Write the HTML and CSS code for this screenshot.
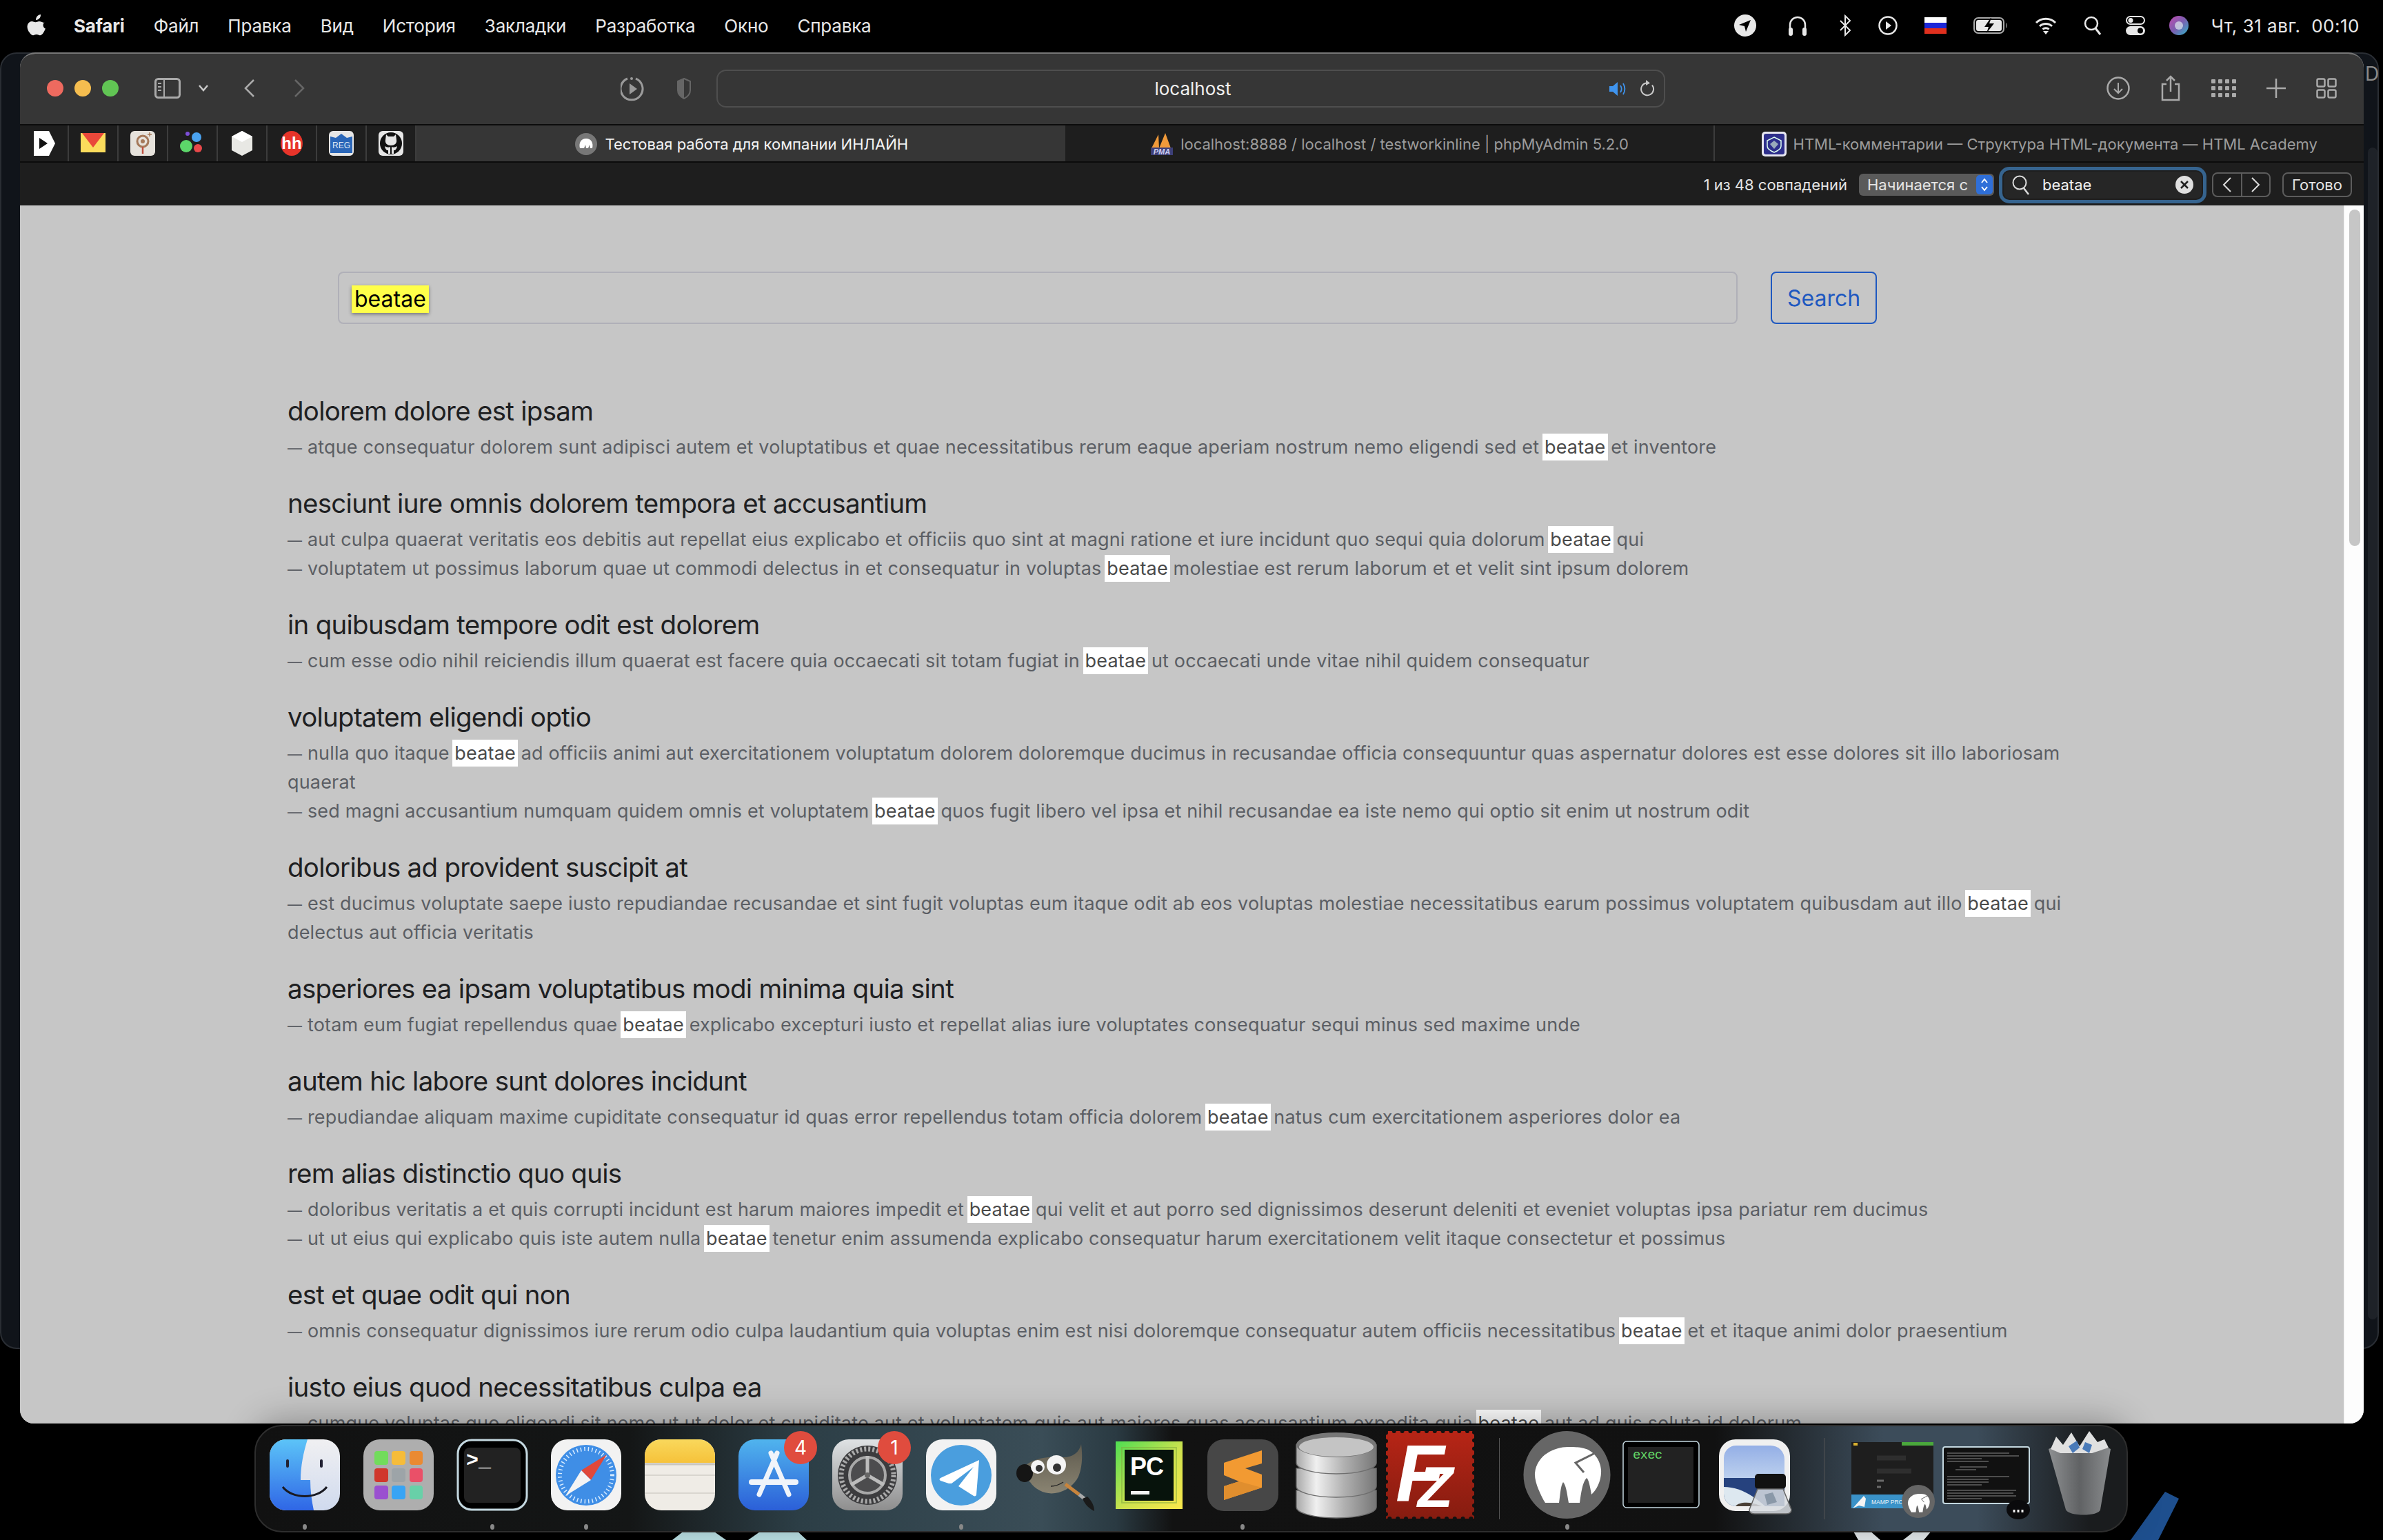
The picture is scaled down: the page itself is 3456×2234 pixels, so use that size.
FILE: index.html
```html
<!DOCTYPE html>
<html lang="ru">
<head>
    <meta charset="UTF-8">
    <title>Safari</title>
    <link rel="stylesheet" href="styles.css">
</head>
<body>
    <svg class="wallpaper" width="3456" height="2234" viewBox="0 0 3456 2234">
        <path d="M975 2234l18-14h40l20 14zM1085 2234l20-14h50l15 14z" fill="#bfe6ea"/>
        <path d="M2695 2234l-8-14h24l16 14zM2760 2234l18-14h24l-12 14z" fill="#e8eef0"/>
        <path d="M3090 2234l50-70 20 10-30 60z" fill="#1e4f8e"/>
    </svg>
    <div class="back-window back-left"></div>
    <div class="back-window back-right"><span class="back-letter">D</span><i class="back-bar"></i></div>

    <header class="menubar">
        <svg class="apple" width="28" height="32" viewBox="0 0 28 32"><path fill="#e8e8e8" d="M20 0c.2 2.200-.6 4.200-1.800 5.600-1.300 1.500-3.200 2.600-5.100 2.400-.2-2 .7-4.200 1.900-5.500C16.300 1 18.300.1 20 0zM26 11c-3.600 2.200-3.100 7.700.9 9.500-.8 2.100-1.700 4-3 5.900-1.300 1.900-2.800 3.800-5 3.800-2 0-2.600-1.200-5-1.200s-3.100 1.200-5 1.200c-2.100 0-3.700-2-5-3.900C.7 22.800-.6 17 1.800 13.200 3 11.300 5 10 7.200 10c2.200 0 3.600 1.300 5.400 1.300 1.700 0 2.800-1.300 5.300-1.300 2.200 0 4.500 1 6.100 2z"/></svg>
        <nav class="menu">
            <b>Safari</b><span>Файл</span><span>Правка</span><span>Вид</span><span>История</span><span>Закладки</span><span>Разработка</span><span>Окно</span><span>Справка</span>
        </nav>
        <div class="status">
            <svg width="32" height="32" viewBox="0 0 32 32"><circle cx="16" cy="16" r="16" fill="#e8e8e8"/><path d="M24 8L7 15l8 2 2 8z" fill="#000"/></svg>
            <svg class="gap-wide" width="28" height="30" viewBox="0 0 28 30"><path d="M3 24V14a11 11 0 0 1 22 0v10" fill="none" stroke="#e8e8e8" stroke-width="2.500"/><rect x="1" y="18" width="6" height="12" rx="3" fill="#e8e8e8"/><rect x="21" y="18" width="6" height="12" rx="3" fill="#e8e8e8"/></svg>
            <svg class="gap-wide" width="18" height="32" viewBox="0 0 18 32"><path d="M2 9l14 14-7 7V2l7 7L2 23" fill="none" stroke="#e8e8e8" stroke-width="2"/></svg>
            <svg width="28" height="28" viewBox="0 0 28 28"><circle cx="14" cy="14" r="12.500" fill="none" stroke="#e8e8e8" stroke-width="2.500"/><path d="M11 8l8 6-8 6z" fill="#e8e8e8"/></svg>
            <svg width="32" height="24" viewBox="0 0 32 24"><rect width="32" height="8" fill="#fff"/><rect y="8" width="32" height="8" fill="#1c27d8"/><rect y="16" width="32" height="8" fill="#e0301e"/></svg>
            <svg width="50" height="24" viewBox="0 0 50 24"><rect x="1" y="1" width="43" height="22" rx="6" fill="none" stroke="#aaa" stroke-width="2"/><rect x="4" y="4" width="37" height="16" rx="3" fill="#e8e8e8"/><path d="M25 1l-9 13h6l-3 9 11-14h-7l3-8z" fill="#000"/><path d="M47 8c2 1 2 7 0 8z" fill="#888"/></svg>
            <svg width="32" height="26" viewBox="0 0 32 26"><path d="M2 9a20 20 0 0 1 28 0M7 14a13 13 0 0 1 18 0M11.500 18.500a6.500 6.500 0 0 1 9 0" fill="none" stroke="#e8e8e8" stroke-width="3"/><path d="M16 26l-4-5h8z" fill="#e8e8e8"/></svg>
            <svg width="26" height="28" viewBox="0 0 26 28"><circle cx="11" cy="11" r="9" fill="none" stroke="#e8e8e8" stroke-width="2.500"/><path d="M17 18l7 9" stroke="#e8e8e8" stroke-width="3"/></svg>
            <svg class="gap-narrow" width="28" height="28" viewBox="0 0 28 28"><rect x="1" y="1" width="26" height="11" rx="5.500" fill="none" stroke="#e8e8e8" stroke-width="2"/><circle cx="7" cy="6.500" r="3.500" fill="#e8e8e8"/><rect y="15" width="28" height="13" rx="6.500" fill="#e8e8e8"/><circle cx="21" cy="21.500" r="4" fill="#000"/></svg>
            <svg class="gap-narrow" width="28" height="28" viewBox="0 0 28 28"><defs><linearGradient id="siri" x1="0" y1="0" x2="1" y2="1"><stop offset="0" stop-color="#c04bb0"/><stop offset=".5" stop-color="#7a5fb0"/><stop offset="1" stop-color="#2fb4c8"/></linearGradient></defs><circle cx="14" cy="14" r="14" fill="url(#siri)"/><circle cx="14" cy="14" r="6" fill="#dfe8f0" opacity=".7"/></svg>
            <span class="clock">Чт, 31 авг.&nbsp; 00:10</span>
        </div>
    </header>

    <main class="window">
        <div class="toolbar">
            <div class="lights"><i class="light red"></i><i class="light yellow"></i><i class="light green"></i></div>
            <svg class="t-sidebar" width="38" height="30" viewBox="0 0 38 30"><rect x="1.500" y="1.500" width="35" height="27" rx="4" fill="none" stroke="#aaa" stroke-width="3"/><path d="M14 2v26" stroke="#aaa" stroke-width="2"/><path d="M5 8h5M5 13h5M5 18h5" stroke="#aaa" stroke-width="2"/></svg>
            <svg class="t-chevron" width="16" height="10" viewBox="0 0 16 10"><path d="M2 1l6 7 6-7" fill="none" stroke="#c8c8c8" stroke-width="2.500"/></svg>
            <svg class="t-back" width="20" height="28" viewBox="0 0 20 28"><path d="M16 2L4 14l12 12" fill="none" stroke="#aaa" stroke-width="2.500"/></svg>
            <svg class="t-forward" width="20" height="28" viewBox="0 0 20 28"><path d="M4 2l12 12L4 26" fill="none" stroke="#666" stroke-width="2.500"/></svg>
            <svg class="t-play" width="36" height="37" viewBox="0 0 36 37"><path d="M22 4a16 16 0 1 1-12 0" fill="none" stroke="#9a9a9a" stroke-width="3"/><circle cx="16" cy="4" r="2" fill="#9a9a9a"/><path d="M13 11l11 8-11 8z" fill="#9a9a9a"/></svg>
            <svg class="t-shield" width="20" height="31" viewBox="0 0 20 31"><path d="M10 1l9 4v13c0 6-5 10-9 12-4-2-9-6-9-12V5z" fill="none" stroke="#666" stroke-width="2"/><path d="M10 1v29C6 28 1 24 1 18V5z" fill="#666"/></svg>
            <div class="urlbar">
                <span class="url-text">localhost</span>
                <svg class="url-sound" width="28" height="22" viewBox="0 0 28 22"><path d="M1 7h5l7-6v20l-7-6H1z" fill="#3f94ee"/><path d="M17 6c2 3 2 7 0 10M21 3c3 5 3 11 0 16" fill="none" stroke="#3f94ee" stroke-width="1.800"/></svg>
                <svg class="url-reload" width="22" height="26" viewBox="0 0 22 26"><path d="M8 5.500a9 9 0 1 0 9 3" fill="none" stroke="#c8c8c8" stroke-width="2"/><path d="M8 1l6 4.500L8 9z" fill="#c8c8c8"/></svg>
            </div>
            <div class="t-right">
                <svg width="34" height="34" viewBox="0 0 34 34"><circle cx="17" cy="17" r="15.500" fill="none" stroke="#aaa" stroke-width="2.500"/><path d="M17 9v15M11 18l6 6 6-6" fill="none" stroke="#aaa" stroke-width="2"/></svg>
                <svg width="30" height="38" viewBox="0 0 30 38"><path d="M9 13H3v23h24V13h-6M15 24V2M9 8l6-6 6 6" fill="none" stroke="#aaa" stroke-width="2.500"/></svg>
                <svg width="36" height="26" viewBox="0 0 36 26" fill="#aaa"><rect width="6" height="6" rx="1"/><rect x="10" width="6" height="6" rx="1"/><rect x="20" width="6" height="6" rx="1"/><rect x="30" width="6" height="6" rx="1"/><rect y="10" width="6" height="6" rx="1"/><rect x="10" y="10" width="6" height="6" rx="1"/><rect x="20" y="10" width="6" height="6" rx="1"/><rect x="30" y="10" width="6" height="6" rx="1"/><rect y="20" width="6" height="6" rx="1"/><rect x="10" y="20" width="6" height="6" rx="1"/><rect x="20" y="20" width="6" height="6" rx="1"/><rect x="30" y="20" width="6" height="6" rx="1"/></svg>
                <svg width="28" height="28" viewBox="0 0 28 28"><path d="M14 0v28M0 14h28" stroke="#aaa" stroke-width="2.500"/></svg>
                <svg width="30" height="30" viewBox="0 0 30 30"><g fill="none" stroke="#aaa" stroke-width="2.500"><rect x="1.500" y="1.500" width="11" height="11" rx="2"/><rect x="17.500" y="1.500" width="11" height="11" rx="2"/><rect x="1.500" y="17.500" width="11" height="11" rx="2"/><rect x="17.500" y="17.500" width="11" height="11" rx="2"/></g></svg>
            </div>
        </div>

        <div class="tabbar">
            <div class="pin"><svg width="36" height="36" viewBox="0 0 36 36"><path d="M3 0h22l9 18-9 18H3z" fill="#fff"/><path d="M11 10l12 8-12 8z" fill="#111"/></svg></div>
            <div class="pin"><svg width="36" height="36" viewBox="0 0 36 36"><rect y="3" width="36" height="28" fill="#fbdc5c"/><path d="M2 3h32L18 24z" fill="#e9483a"/></svg></div>
            <div class="pin"><svg width="36" height="36" viewBox="0 0 36 36"><rect width="36" height="36" rx="6" fill="#e6e2dc"/><circle cx="18" cy="15" r="8" fill="none" stroke="#a5795a" stroke-width="3"/><circle cx="18" cy="15" r="3" fill="#a5795a"/><path d="M18 23v10" stroke="#c05040" stroke-width="2.500"/><path d="M28 2v6M25 5h6" stroke="#a5795a" stroke-width="1.500"/></svg></div>
            <div class="pin"><svg width="36" height="36" viewBox="0 0 36 36"><circle cx="24" cy="9" r="7" fill="#4aa3f0"/><circle cx="11" cy="4" r="3" fill="#7d4fd8"/><circle cx="9" cy="22" r="9" fill="#5cd66a"/><circle cx="26" cy="25" r="6" fill="#e8484a"/></svg></div>
            <div class="pin"><svg width="36" height="36" viewBox="0 0 36 36"><path d="M18 0l15 8v20l-15 8-15-8V8z" fill="#e8e8e4"/><path d="M18 0l15 8-15 8L3 8z" fill="#fff"/></svg></div>
            <div class="pin"><svg width="36" height="36" viewBox="0 0 36 36"><ellipse cx="18" cy="18" rx="16" ry="18" fill="#e8342a"/><text x="18" y="26" class="fav-hh" text-anchor="middle">hh</text></svg></div>
            <div class="pin"><svg width="36" height="36" viewBox="0 0 36 36"><rect width="36" height="36" rx="6" fill="#e6e6e6"/><path d="M2 8l8 2 8-6 8 6 8-2v24H2z" fill="#2a66b8"/><text x="18" y="25" class="fav-reg" text-anchor="middle">REG</text></svg></div>
            <div class="pin"><svg width="36" height="36" viewBox="0 0 36 36"><rect width="36" height="36" rx="6" fill="#e6e6e6"/><circle cx="18" cy="18" r="16" fill="#111"/><path d="M11 5l3 3h8l3-3 1 8c1 5-3 8-8 8s-9-3-8-8z" fill="#e6e6e6"/><path d="M9 22c3 2 6 2 8 1v10h-3v-5c-3 0-4-2-5-6zM19 23c2 1 5 1 8-1-1 4-2 6-5 6v5h-3z" fill="#e6e6e6"/></svg></div>
            <div class="tab tab-active"><svg width="36" height="32" viewBox="0 0 36 32"><circle cx="18" cy="16" r="16" fill="#777"/><path d="M9 22c-2-8 2-14 9-14s11 6 9 14h-3l-1-5-2 5h-3l-1-5-2 5z" fill="#fff"/></svg><span>Тестовая работа для компании ИНЛАЙН</span></div>
            <div class="tab"><svg width="34" height="32" viewBox="0 0 34 32"><path d="M2 22L12 2l1 20zM13 22L22 0l8 22zM3 22h28" fill="#f09a3a"/><rect x="1" y="21" width="32" height="11" fill="#3c3f78"/><text x="17" y="30.500" class="fav-pma" text-anchor="middle">PMA</text></svg><span>localhost:8888 / localhost / testworkinline | phpMyAdmin 5.2.0</span></div>
            <div class="tab"><svg width="36" height="36" viewBox="0 0 36 36"><rect width="36" height="36" rx="5" fill="#e6e6f0"/><rect x="3" y="3" width="30" height="30" rx="3" fill="#2e2f8c"/><path d="M18 8l10 5v8c0 4-5 7-10 9-5-2-10-5-10-9v-8z" fill="none" stroke="#dfe" stroke-width="1.500"/><path d="M18 13l6 5-6 7-6-7z" fill="#9ab"/></svg><span>HTML-комментарии — Структура HTML-документа — HTML Academy</span></div>
        </div>

        <div class="findbar">
            <span class="find-count">1 из 48 совпадений</span>
            <div class="find-select">Начинается с<i class="find-stepper"><svg width="12" height="24" viewBox="0 0 12 24"><path d="M2 9l4-5 4 5M2 15l4 5 4-5" fill="none" stroke="#fff" stroke-width="2"/></svg></i></div>
            <div class="find-field">
                <svg width="26" height="30" viewBox="0 0 26 30"><circle cx="11" cy="12" r="9.500" fill="none" stroke="#ddd" stroke-width="2"/><path d="M17 20l7 9" stroke="#ddd" stroke-width="2.500"/></svg>
                <span class="find-value">beatae</span>
                <svg class="find-clear" width="26" height="26" viewBox="0 0 26 26"><circle cx="13" cy="13" r="13" fill="#e0e0e0"/><path d="M8 8l10 10M18 8L8 18" stroke="#222" stroke-width="2.500"/></svg>
            </div>
            <div class="find-nav">
                <span><svg width="14" height="24" viewBox="0 0 14 24"><path d="M12 2L2 12l10 10" fill="none" stroke="#ddd" stroke-width="2"/></svg></span>
                <span><svg width="14" height="24" viewBox="0 0 14 24"><path d="M2 2l10 10L2 22" fill="none" stroke="#ddd" stroke-width="2"/></svg></span>
            </div>
            <div class="find-done">Готово</div>
        </div>

        <div class="viewport">
            <div class="page">
                <form class="search-form">
                    <div class="search-input"><mark class="hit-current">beatae</mark></div>
                    <button class="search-btn" type="button">Search</button>
                </form>

                <section class="post">
                    <h5>dolorem dolore est ipsam</h5>
                    <p><span class="dash">—</span> atque consequatur dolorem sunt adipisci autem et voluptatibus et quae necessitatibus rerum eaque aperiam nostrum nemo eligendi sed et <mark>beatae</mark> et inventore</p>
                </section>
                <section class="post">
                    <h5>nesciunt iure omnis dolorem tempora et accusantium</h5>
                    <p><span class="dash">—</span> aut culpa quaerat veritatis eos debitis aut repellat eius explicabo et officiis quo sint at magni ratione et iure incidunt quo sequi quia dolorum <mark>beatae</mark> qui</p>
                    <p><span class="dash">—</span> voluptatem ut possimus laborum quae ut commodi delectus in et consequatur in voluptas <mark>beatae</mark> molestiae est rerum laborum et et velit sint ipsum dolorem</p>
                </section>
                <section class="post">
                    <h5>in quibusdam tempore odit est dolorem</h5>
                    <p><span class="dash">—</span> cum esse odio nihil reiciendis illum quaerat est facere quia occaecati sit totam fugiat in <mark>beatae</mark> ut occaecati unde vitae nihil quidem consequatur</p>
                </section>
                <section class="post">
                    <h5>voluptatem eligendi optio</h5>
                    <p><span class="dash">—</span> nulla quo itaque <mark>beatae</mark> ad officiis animi aut exercitationem voluptatum dolorem doloremque ducimus in recusandae officia consequuntur quas aspernatur dolores est esse dolores sit illo laboriosam quaerat</p>
                    <p><span class="dash">—</span> sed magni accusantium numquam quidem omnis et voluptatem <mark>beatae</mark> quos fugit libero vel ipsa et nihil recusandae ea iste nemo qui optio sit enim ut nostrum odit</p>
                </section>
                <section class="post">
                    <h5>doloribus ad provident suscipit at</h5>
                    <p><span class="dash">—</span> est ducimus voluptate saepe iusto repudiandae recusandae et sint fugit voluptas eum itaque odit ab eos voluptas molestiae necessitatibus earum possimus voluptatem quibusdam aut illo <mark>beatae</mark> qui delectus aut officia veritatis</p>
                </section>
                <section class="post">
                    <h5>asperiores ea ipsam voluptatibus modi minima quia sint</h5>
                    <p><span class="dash">—</span> totam eum fugiat repellendus quae <mark>beatae</mark> explicabo excepturi iusto et repellat alias iure voluptates consequatur sequi minus sed maxime unde</p>
                </section>
                <section class="post">
                    <h5>autem hic labore sunt dolores incidunt</h5>
                    <p><span class="dash">—</span> repudiandae aliquam maxime cupiditate consequatur id quas error repellendus totam officia dolorem <mark>beatae</mark> natus cum exercitationem asperiores dolor ea</p>
                </section>
                <section class="post">
                    <h5>rem alias distinctio quo quis</h5>
                    <p><span class="dash">—</span> doloribus veritatis a et quis corrupti incidunt est harum maiores impedit et <mark>beatae</mark> qui velit et aut porro sed dignissimos deserunt deleniti et eveniet voluptas ipsa pariatur rem ducimus</p>
                    <p><span class="dash">—</span> ut ut eius qui explicabo quis iste autem nulla <mark>beatae</mark> tenetur enim assumenda explicabo consequatur harum exercitationem velit itaque consectetur et possimus</p>
                </section>
                <section class="post">
                    <h5>est et quae odit qui non</h5>
                    <p><span class="dash">—</span> omnis consequatur dignissimos iure rerum odio culpa laudantium quia voluptas enim est nisi doloremque consequatur autem officiis necessitatibus <mark>beatae</mark> et et itaque animi dolor praesentium</p>
                </section>
                <section class="post">
                    <h5>iusto eius quod necessitatibus culpa ea</h5>
                    <p><span class="dash">—</span> cumque voluptas quo eligendi sit nemo ut ut dolor et cupiditate aut et voluptatem quis aut maiores quas accusantium expedita quia <mark>beatae</mark> aut ad quis soluta id dolorum</p>
                </section>
            </div>
            <div class="scrolltrack"><i class="scrollthumb"></i></div>
        </div>
    </main>

    <footer class="dock">
        <div class="dock-item running">
            <svg width="136" height="136" viewBox="0 0 136 136"><defs><linearGradient id="fd" x1="0" y1="0" x2="0" y2="1"><stop offset="0" stop-color="#5cc4f8"/><stop offset="1" stop-color="#2f66e6"/></linearGradient><linearGradient id="fl" x1="0" y1="0" x2="0" y2="1"><stop offset="0" stop-color="#f0f0f2"/><stop offset="1" stop-color="#d0daee"/></linearGradient></defs><rect x="17" y="16" width="102" height="103" rx="24" fill="url(#fl)"/><path d="M41 16h31c-6 19-10 39-10 59h14c0 15 2 30 5 44H41a24 24 0 0 1-24-24V40a24 24 0 0 1 24-24z" fill="url(#fd)"/><rect x="41" y="45" width="4" height="12" rx="2" fill="#223"/><rect x="90" y="45" width="4" height="12" rx="2" fill="#223"/><path d="M36 85c14 18 50 18 64 0" fill="none" stroke="#1a1a22" stroke-width="3"/></svg>
        </div>
        <div class="dock-item">
            <svg width="136" height="136" viewBox="0 0 136 136"><rect x="17" y="16" width="102" height="103" rx="24" fill="#aeaeae"/><rect x="33" y="33" width="20" height="20" rx="4" fill="#72dc5c"/><rect x="58" y="33" width="20" height="20" rx="4" fill="#f6bc3a"/><rect x="84" y="33" width="19" height="20" rx="4" fill="#ea8a32"/><rect x="33" y="58" width="20" height="20" rx="4" fill="#d0372c"/><rect x="58" y="58" width="20" height="20" rx="4" fill="#9da4a8"/><rect x="84" y="58" width="19" height="20" rx="4" fill="#ea5068"/><rect x="33" y="83" width="20" height="20" rx="4" fill="#9a50d0"/><rect x="58" y="83" width="20" height="20" rx="4" fill="#38a4f4"/><rect x="84" y="83" width="19" height="20" rx="4" fill="#68d0a8"/></svg>
        </div>
        <div class="dock-item running">
            <svg width="136" height="136" viewBox="0 0 136 136"><rect x="18" y="17" width="100" height="101" rx="20" fill="#000" stroke="#c4d8e0" stroke-width="3"/><rect x="27" y="28" width="82" height="80" rx="8" fill="#222"/><text x="30" y="55" class="dock-term">&gt;_</text></svg>
        </div>
        <div class="dock-item running">
            <svg width="136" height="136" viewBox="0 0 136 136"><rect x="17" y="16" width="102" height="103" rx="24" fill="#f2f2f2"/><circle cx="68" cy="68" r="44" fill="#3f8ee6"/><circle cx="68" cy="68" r="38" fill="none" stroke="#d8ecff" stroke-width="6" stroke-dasharray="1.500 4"/><path d="M98 38L61 61l14 14z" fill="#e0483a"/><path d="M38 98l37-23-14-14z" fill="#f4f4f4"/></svg>
        </div>
        <div class="dock-item">
            <svg width="136" height="136" viewBox="0 0 136 136"><defs><linearGradient id="nt" x1="0" y1="0" x2="0" y2="1"><stop offset="0" stop-color="#f9d85c"/><stop offset="1" stop-color="#f6c23a"/></linearGradient></defs><rect x="17" y="16" width="102" height="103" rx="24" fill="#efece6"/><path d="M41 16h54a24 24 0 0 1 24 24v10H17V40a24 24 0 0 1 24-24z" fill="url(#nt)"/><path d="M17 52h102" stroke="#c9c5bd" stroke-width="3"/><path d="M17 68h102M17 94h102" stroke="#d9d6cf" stroke-width="2"/></svg>
        </div>
        <div class="dock-item">
            <svg width="136" height="136" viewBox="0 0 136 136"><defs><linearGradient id="as" x1="0" y1="0" x2="0" y2="1"><stop offset="0" stop-color="#50b4ee"/><stop offset="1" stop-color="#2b5fd8"/></linearGradient></defs><rect x="17" y="16" width="102" height="103" rx="24" fill="url(#as)"/><path d="M73 36L47 96M64 36l26 60" stroke="#f0f4fa" stroke-width="7" stroke-linecap="round"/><path d="M36 78h64" stroke="#f0f4fa" stroke-width="8" stroke-linecap="round"/></svg>
            <b class="badge">4</b>
        </div>
        <div class="dock-item">
            <svg width="136" height="136" viewBox="0 0 136 136"><defs><linearGradient id="st" x1="0" y1="0" x2="0" y2="1"><stop offset="0" stop-color="#dfe2e4"/><stop offset="1" stop-color="#8e8e8e"/></linearGradient></defs><rect x="17" y="16" width="102" height="103" rx="24" fill="url(#st)"/><circle cx="68" cy="68" r="43" fill="#3c3c3e"/><circle cx="68" cy="68" r="38" fill="none" stroke="#aaa" stroke-width="7" stroke-dasharray="3 3"/><circle cx="68" cy="68" r="26" fill="#4c4c4e" stroke="#a8a8a8" stroke-width="4"/><path d="M68 68V40M68 68l24 14M68 68L44 82" stroke="#bcbcbc" stroke-width="5"/><circle cx="68" cy="68" r="4" fill="#666"/></svg>
            <b class="badge">1</b>
        </div>
        <div class="dock-item running">
            <svg width="136" height="136" viewBox="0 0 136 136"><rect x="17" y="16" width="102" height="103" rx="24" fill="#f2f2f2"/><circle cx="68" cy="68" r="44" fill="#4a9ede"/><path d="M94 46L38 72c-2 1-2 3 0 4l12 4 4 0 32-24-22 28 22 14c2 1 4 0 4-2z" fill="#fff"/></svg>
        </div>
        <div class="dock-item">
            <svg width="136" height="136" viewBox="0 0 136 136"><defs><linearGradient id="gp" x1="0" y1="0" x2="0" y2="1"><stop offset="0" stop-color="#5e5a4e"/><stop offset="1" stop-color="#8a8472"/></linearGradient></defs><path d="M106 23C103 36 92 43 78 42 58 40 36 44 24 55 18 60 22 72 32 78 40 90 55 96 68 94 84 92 96 82 102 70 108 56 108 38 106 23z" fill="url(#gp)"/><ellipse cx="24" cy="65" rx="12" ry="13" fill="#151515"/><circle cx="43" cy="56" r="10" fill="#f4f4f4"/><circle cx="70" cy="53" r="14" fill="#f4f4f4"/><circle cx="45" cy="58" r="5" fill="#333"/><circle cx="71" cy="57" r="6" fill="#333"/><path d="M62 84c6 0 12-2 18-6" fill="none" stroke="#222" stroke-width="1.500"/><path d="M83 81l20 15" stroke="#c8843c" stroke-width="5"/><path d="M103 96l9 7" stroke="#aaa" stroke-width="5"/><path d="M108 102l7-3c6 6 10 13 10 21-7-3-14-10-17-18z" fill="#1a1a1a"/></svg>
        </div>
        <div class="dock-item">
            <svg width="136" height="136" viewBox="0 0 136 136"><defs><linearGradient id="pc" x1="0" y1="0" x2="1" y2="1"><stop offset="0" stop-color="#4ede52"/><stop offset=".55" stop-color="#cfe24e"/><stop offset="1" stop-color="#fbe84c"/></linearGradient></defs><rect x="20" y="19" width="97" height="98" fill="url(#pc)"/><rect x="29" y="28" width="79" height="80" fill="none" stroke="#7fa83c" stroke-width="2" opacity=".5"/><rect x="33" y="31" width="71" height="74" fill="#07130c"/><text x="41" y="68" class="dock-pc">PC</text><rect x="42" y="91" width="27" height="5" fill="#f4f4f4"/></svg>
        </div>
        <div class="dock-item running">
            <svg width="136" height="136" viewBox="0 0 136 136"><rect x="17" y="16" width="103" height="104" rx="24" fill="#474747"/><path d="M96 32v19l-24 7 24 9v19l-55 18V84l22-7-22-9V50z" fill="#f29a32"/><path d="M63 77l33 9-55 18V84z" fill="#e08e2e"/></svg>
        </div>
        <div class="dock-item">
            <svg width="136" height="136" viewBox="0 0 136 136"><defs><linearGradient id="db" x1="0" y1="0" x2="1" y2="0"><stop offset="0" stop-color="#a8a8a8"/><stop offset=".25" stop-color="#f0f0f0"/><stop offset=".6" stop-color="#b0b0b0"/><stop offset="1" stop-color="#777"/></linearGradient></defs><g stroke="#6e6e6e" stroke-width="1.500"><path d="M10 90h116v24c0 9-26 16-58 16s-58-7-58-16z" fill="url(#db)"/><path d="M10 58h116v26c0 9-26 16-58 16s-58-7-58-16z" fill="url(#db)"/><path d="M10 24h116v26c0 9-26 16-58 16s-58-7-58-16z" fill="url(#db)"/></g><ellipse cx="68" cy="24" rx="58" ry="18" fill="#777"/><ellipse cx="68" cy="27" rx="54" ry="14" fill="#c4c4c4"/></svg>
        </div>
        <div class="dock-item">
            <svg width="136" height="136" viewBox="0 0 136 136"><defs><linearGradient id="fz" x1="0" y1="0" x2="0" y2="1"><stop offset="0" stop-color="#b72516"/><stop offset="1" stop-color="#861c10"/></linearGradient></defs><rect x="4" y="4" width="128" height="127" fill="url(#fz)"/><rect x="4" y="4" width="128" height="127" fill="none" stroke="#111" stroke-width="6" stroke-linecap="round" stroke-dasharray="0 11.800"/><text x="18" y="106" class="dock-f">F</text><text x="50" y="114" class="dock-z">Z</text></svg>
        </div>
        <i class="dock-sep"></i>
        <div class="dock-item running">
            <svg width="136" height="136" viewBox="0 0 136 136"><defs><g id="mamp"><path d="M69 27C50 27 24 38 21 65 20 78 30 98 36 108H56C58 96 58 84 62 78 67 84 68 98 70 108H86C88 94 90 78 96 72 99 74 101 84 103 96 110 90 118 76 117 60 116 46 106 32 92 29 84 27 76 27 69 27z" fill="#fff"/><path d="M108 36L80 50 92 64" fill="none" stroke="#666" stroke-width="3"/></g></defs><ellipse cx="67.500" cy="67.500" rx="63" ry="63.500" fill="#666"/><use href="#mamp"/></svg>
        </div>
        <div class="dock-item">
            <svg width="136" height="136" viewBox="0 0 136 136"><rect x="13" y="19" width="110" height="96" rx="5" fill="#000" stroke="#c4d8e0" stroke-width="1.500"/><rect x="20" y="27" width="95" height="81" fill="#222"/><text x="27" y="44" class="dock-exec">exec</text></svg>
        </div>
        <div class="dock-item">
            <svg width="136" height="136" viewBox="0 0 136 136"><defs><linearGradient id="pv" x1="0" y1="0" x2="0" y2="1"><stop offset="0" stop-color="#94afe6"/><stop offset="1" stop-color="#bcd0ee"/></linearGradient></defs><rect x="16" y="16" width="103" height="104" rx="24" fill="#f0f0f0"/><path d="M41 25h50a20 20 0 0 1 20 20v27H23V43a18 18 0 0 1 18-18z" fill="url(#pv)"/><path d="M23 72h88v41H41a18 18 0 0 1-18-18z" fill="#26427e"/><path d="M23 85c20 0 40 10 60 28H41a18 18 0 0 1-18-18z" fill="#dde8f0"/><path d="M40 113c4-5 16-7 30-3l8 3z" fill="#4a4036"/><rect x="68" y="66" width="45" height="22" rx="5" fill="#111"/><path d="M72 88h37l12 30c0 4-3 6-8 6H68c-5 0-8-2-8-6z" fill="#d8dce0" fill-opacity=".85" stroke="#666" stroke-width="1.500"/><path d="M82 96l12-3 6 14-14 4z" fill="#8a98a8"/></svg>
        </div>
        <i class="dock-sep"></i>
        <div class="dock-item">
            <svg width="136" height="136" viewBox="0 0 136 136"><rect x="9" y="20" width="119" height="96" fill="#1e1e1e"/><rect x="82" y="20" width="46" height="5" fill="#4aa83c"/><rect x="12" y="21" width="6" height="4" fill="#d8b030"/><path d="M46 43h42M46 62h50" stroke="#2e2e2e" stroke-width="7"/><path d="M46 76h10M46 85h6" stroke="#6a6a6a" stroke-width="3"/><rect x="9" y="96" width="119" height="20" fill="#3a92c8"/><path d="M11 116l16-18 3 4-2 12-8-2z" fill="#f4f4f4"/><text x="38" y="110" class="dock-thumb">MAMP PRO 6</text><ellipse cx="106" cy="106" rx="24" ry="24" fill="#666"/><use href="#mamp" transform="translate(84 86) scale(.33)"/></svg>
        </div>
        <div class="dock-item">
            <svg width="136" height="136" viewBox="0 0 136 136"><rect x="6" y="27" width="125" height="82" rx="3" fill="#111" stroke="#c4d8e0" stroke-width="2"/><path d="M12 36h90M12 40h104M12 44h50M12 48h60M30 56h40M24 60h30M12 70h90M12 74h60M12 78h60M12 82h50M12 90h100M12 94h96M12 98h100M12 102h50" stroke="#8a8a8a" stroke-width="1.200"/><ellipse cx="115" cy="118" rx="17" ry="14" fill="#0a0a0c"/><path d="M109 118v4M115 118v4M121 118v4" stroke="#eee" stroke-width="3"/></svg>
        </div>
        <div class="dock-item">
            <svg width="136" height="136" viewBox="0 0 136 136"><defs><linearGradient id="tr" x1="0" y1="0" x2="1" y2="0"><stop offset="0" stop-color="#8e9092"/><stop offset=".5" stop-color="#606264"/><stop offset="1" stop-color="#8a8c8e"/></linearGradient></defs><path d="M23 30c10-6 80-6 90 0l-15 88c-2 10-46 10-50 0z" fill="url(#tr)"/><path d="M26 30l8-18 10 12 12-18 12 20 14-22 12 16 10-4 6 12-24 8H40z" fill="#e0e0e0"/><path d="M52 26l12-8 4 10-10 8zM76 20l10 4-4 12-10-6z" fill="#4a7ab8"/></svg>
        </div>
    </footer>
</body>
</html>
```

FILE: styles.css
```css
* {
    box-sizing: border-box;
}
body {
    margin: 0;
    width: 3456px;
    height: 2234px;
    position: relative;
    overflow: hidden;
    background-color: #000;
    font-family: Inter, "Noto Sans", sans-serif;
}
svg {
    display: block;
    flex: none;
}
.wallpaper {
    position: absolute;
    left: 0;
    top: 0;
}

/* windows behind safari */
.back-window {
    position: absolute;
    top: 76px;
    background-color: #10141a;
    border: 2px solid #2a2e34;
}
.back-left {
    left: 0;
    width: 60px;
    height: 1881px;
    border-radius: 24px 0 0 24px;
}
.back-right {
    left: 3400px;
    width: 50px;
    height: 1881px;
    border-radius: 0 24px 24px 0;
}
.back-letter {
    position: absolute;
    left: 28px;
    top: 12px;
    color: #8a8a8a;
    font-size: 28px;
}
.back-bar {
    position: absolute;
    left: 32px;
    top: 136px;
    width: 14px;
    height: 1700px;
    border-radius: 8px;
    background-color: #1e2228;
}

/* menu bar */
.menubar {
    height: 76px;
    padding-bottom: 2px;
    display: flex;
    align-items: center;
    color: #e8e8e8;
    font-size: 26px;
    background-color: #000;
    position: relative;
}
.apple {
    margin-left: 39px;
}
.menu {
    display: flex;
    gap: 42px;
    margin-left: 40px;
    letter-spacing: -0.2px;
}
.status {
    margin-left: auto;
    display: flex;
    align-items: center;
    gap: 39px;
    padding-right: 34px;
}
.gap-wide {
    margin-left: 7px;
}
.gap-narrow {
    margin-left: -4px;
}
.clock {
    margin-left: -6px;
    letter-spacing: .5px;
    white-space: nowrap;
}

/* safari window */
.window {
    position: absolute;
    left: 29px;
    top: 76px;
    width: 3399px;
    height: 1989px;
    display: flex;
    flex-direction: column;
    overflow: hidden;
    border-top: 2px solid #777;
    border-radius: 22px 22px 20px 20px;
    background-color: #c6c6c6;
}
.toolbar {
    height: 102px;
    flex: none;
    padding-bottom: 2px;
    display: flex;
    align-items: center;
    background-color: #363636;
}
.lights {
    display: flex;
    gap: 16px;
    margin-left: 39px;
}
.light {
    width: 24px;
    height: 24px;
    border-radius: 50%;
}
.red {
    background-color: #ee6a5f;
}
.yellow {
    background-color: #f5bd4f;
}
.green {
    background-color: #61c554;
}
.t-sidebar {
    margin-left: 52px;
}
.t-chevron {
    margin-left: 25px;
}
.t-back {
    margin-left: 49px;
}
.t-forward {
    margin-left: 52px;
}
.t-play {
    margin-left: 456px;
}
.t-shield {
    margin-left: 46px;
}
.urlbar {
    width: 1376px;
    height: 55px;
    margin-left: 37px;
    position: relative;
    display: flex;
    align-items: center;
    justify-content: center;
    border: 2px solid #4e4e4e;
    border-radius: 14px;
    color: #f0f0f0;
    font-size: 26px;
}
.url-text {
    margin-left: 6px;
}
.url-sound {
    position: absolute;
    right: 52px;
    top: 15px;
}
.url-reload {
    position: absolute;
    right: 12px;
    top: 12px;
}
.t-right {
    display: flex;
    align-items: center;
    gap: 44px;
    margin-left: 640px;
}

/* tabs */
.tabbar {
    height: 56px;
    flex: none;
    display: flex;
    background-color: #1e1e1e;
    border-top: 2px solid #0c0c0c;
    border-bottom: 2px solid #0c0c0c;
    color: #9c9c9c;
    font-size: 22px;
}
.pin {
    width: 72px;
    display: flex;
    align-items: center;
    justify-content: center;
    border-right: 2px solid #3c3c3c;
}
.pin:first-child {
    width: 71px;
}
.tab {
    flex: 1;
    padding-top: 2px;
    display: flex;
    align-items: center;
    justify-content: center;
    gap: 10px;
    white-space: nowrap;
    border-left: 2px solid #3c3c3c;
}
.tab-active {
    background-color: #363636;
    color: #f4f4f4;
    border-left: 0;
}
.tab-active + .tab {
    border-left: 0;
}
.fav-hh {
    font-family: "Liberation Sans", sans-serif;
    font-size: 24px;
    font-weight: 700;
    fill: #fff;
}
.fav-reg {
    font-family: "Liberation Sans", sans-serif;
    font-size: 12px;
    fill: #dfe8f4;
}
.fav-pma {
    font-family: "Liberation Sans", sans-serif;
    font-size: 11px;
    font-style: italic;
    font-weight: 700;
    fill: #cfd0f0;
}

/* find bar */
.findbar {
    height: 62px;
    flex: none;
    padding: 2px 17px 0 0;
    display: flex;
    align-items: center;
    justify-content: flex-end;
    background-color: #1e1e1e;
    color: #e4e4e4;
    font-size: 22px;
}
.find-count {
    margin-right: 17px;
    white-space: nowrap;
}
.find-select {
    width: 196px;
    height: 32px;
    margin-right: 12px;
    padding-left: 12px;
    display: flex;
    align-items: center;
    justify-content: space-between;
    border-radius: 6px;
    background-color: #5a5a5a;
    white-space: nowrap;
}
.find-stepper {
    width: 24px;
    height: 28px;
    margin-right: 2px;
    display: flex;
    align-items: center;
    justify-content: center;
    border-radius: 5px;
    background-color: #2f6fd8;
}
.find-field {
    width: 291px;
    height: 43px;
    margin-right: 13px;
    padding: 0 12px;
    display: flex;
    align-items: center;
    border: 2px solid #1e1e1e;
    border-radius: 10px;
    background-color: #262626;
    box-shadow: 0 0 0 5px #36648f;
}
.find-value {
    margin-left: 18px;
    color: #f0f0f0;
}
.find-clear {
    margin-left: auto;
}
.find-nav {
    display: flex;
    width: 85px;
    height: 36px;
    margin-right: 17px;
    border: 2px solid #5c5c5c;
    border-radius: 8px;
}
.find-nav span {
    flex: 1;
    display: flex;
    align-items: center;
    justify-content: center;
}
.find-nav span + span {
    border-left: 2px solid #5c5c5c;
}
.find-done {
    width: 101px;
    height: 36px;
    display: flex;
    align-items: center;
    justify-content: center;
    border: 2px solid #5c5c5c;
    border-radius: 8px;
}

/* page */
.viewport {
    flex: 1;
    display: flex;
    min-height: 0;
}
.page {
    flex: 1;
    height: 2000px;
    padding: 96px 388px 0;
    background-color: #c6c6c6;
    color: #5b5e64;
    font-size: 27px;
    letter-spacing: .17px;
    line-height: 42px;
}
.dash {
    font-size: 21px;
    line-height: 1;
}
.search-form {
    display: flex;
    gap: 48px;
    margin-left: 73px;
    margin-bottom: 102px;
    width: 2232px;
}
.search-input {
    flex: 1;
    height: 76px;
    padding: 18px 18px;
    border: 2px solid #b0b0b8;
    border-radius: 8px;
    font-size: 32px;
    letter-spacing: 0;
    line-height: 40px;
}
.search-btn {
    width: 154px;
    height: 76px;
    border: 2px solid #1e58c0;
    border-radius: 8px;
    background-color: transparent;
    color: #1e58c0;
    font-family: inherit;
    font-size: 32px;
}
mark {
    color: #4a4a4a;
    background-color: #fff;
    box-shadow: 0 0 0 3px #fff;
}
mark.hit-current {
    display: inline-block;
    padding: 0 4px;
    color: #000;
    background-color: #ffff4a;
    box-shadow: 0 2px 5px rgba(0, 0, 0, .4);
}
.post {
    margin-bottom: 36px;
}
.post h5 {
    margin: 0 0 8px;
    color: #1e2022;
    font-size: 38.500px;
    font-weight: 400;
    letter-spacing: -.74px;
    line-height: 48px;
}
.post p {
    margin: 0;
}
.scrolltrack {
    width: 29px;
    flex: none;
    padding: 6px 6px 0 7px;
    background-color: #fdfdfd;
    border-left: 1px solid #eee;
}
.scrollthumb {
    display: block;
    width: 16px;
    height: 488px;
    border-radius: 8px;
    background-color: #c6c6c6;
}

/* dock */
.dock {
    position: absolute;
    left: 369px;
    top: 2067px;
    width: 2717px;
    height: 156px;
    padding: 3px 3px 0;
    display: flex;
    align-items: flex-start;
    border: 2px solid #2e2e2e;
    border-radius: 40px;
    background: linear-gradient(90deg, #111 0, #141616 20%, #2c3e46 29%, #3a4d57 42%, #2a3a42 46%, #121212 49%, #111 78%, #3c4c5a 87%, #3c4c5a 92%, #1a1c1e 98%);
    box-shadow: 0 -6px 50px rgba(0, 0, 0, .3);
}
.dock-item {
    width: 136px;
    height: 136px;
    position: relative;
    flex: none;
}
.dock-item.running::after {
    content: "";
    position: absolute;
    left: 65px;
    top: 139px;
    width: 6px;
    height: 8px;
    border-radius: 50%;
    background-color: #888;
}
.dock-sep {
    width: 1px;
    height: 118px;
    margin: 14px 30px 0 32px;
    flex: none;
    background-color: #555;
}
.badge {
    position: absolute;
    left: 83px;
    top: 4px;
    width: 48px;
    height: 48px;
    display: flex;
    align-items: center;
    justify-content: center;
    border-radius: 50%;
    background-color: #e04c3e;
    color: #fff;
    font-size: 28px;
    font-weight: 400;
}
.dock-term {
    font-family: "Liberation Mono", monospace;
    font-size: 30px;
    font-weight: 700;
    fill: #fff;
}
.dock-pc {
    font-family: "Liberation Sans", sans-serif;
    font-size: 36px;
    font-weight: 700;
    letter-spacing: -1px;
    fill: #fff;
}
.dock-f {
    font-family: "Liberation Sans", sans-serif;
    font-size: 116px;
    font-style: italic;
    font-weight: 700;
    fill: #fff;
}
.dock-z {
    font-family: "Liberation Sans", sans-serif;
    font-size: 84px;
    font-style: italic;
    font-weight: 700;
    fill: #fff;
}
.dock-exec {
    font-family: "Liberation Mono", monospace;
    font-size: 19px;
    letter-spacing: -.8px;
    fill: #62d868;
}
.dock-thumb {
    font-family: "Liberation Sans", sans-serif;
    font-size: 8.500px;
    fill: #e8f2f8;
}
```
